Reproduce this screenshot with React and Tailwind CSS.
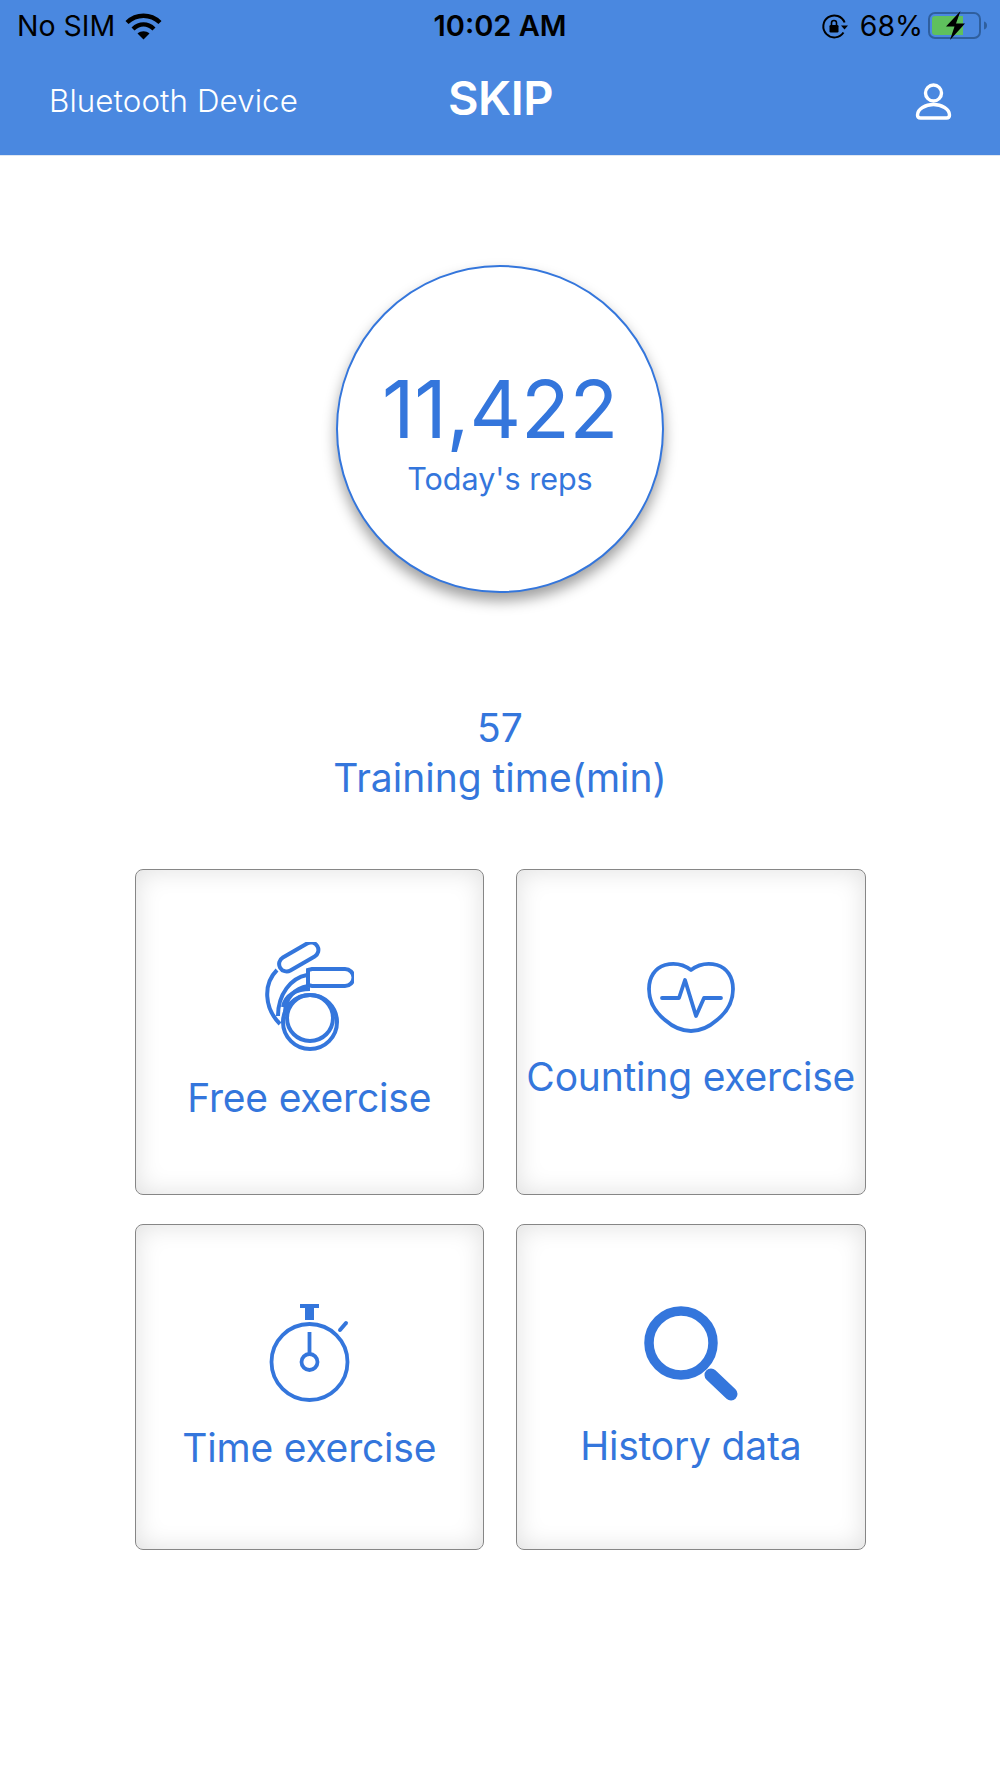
const BLUE = "#3476dc";

function Wifi() {
  return (
    <svg width="37" height="27" viewBox="0 0 37 27" fill="none" stroke="#000" strokeWidth="4.4">
      <path d="M2 9.5C11.5 0.5 25.5 0.5 35 9.5" />
      <path d="M8 16C14.5 10 22.5 10 29 16" />
      <path d="M18.5 26.5L12.5 20.5C16 17.5 21 17.5 24.5 20.5Z" fill="#000" stroke="none" />
    </svg>
  );
}

function RotationLock() {
  return (
    <svg width="27" height="27" viewBox="0 0 27 27" fill="none">
      <path d="M22.5 19.5A11 11 0 1 1 23.6 9.5" stroke="#000" strokeWidth="2" />
      <path d="M20 12.5h7l-3.5 4z" fill="#000" />
      <rect x="8.5" y="12" width="9" height="7.5" rx="1.2" fill="#000" />
      <path d="M10.5 12V10a2.5 2.5 0 0 1 5 0v2" stroke="#000" strokeWidth="1.6" />
    </svg>
  );
}

function Battery() {
  return (
    <svg width="62" height="30" viewBox="0 0 62 30" fill="none">
      <rect x="3" y="2" width="51" height="25" rx="6" stroke="#2f5f9e" strokeWidth="2" />
      <rect x="6" y="5" width="16" height="19" rx="3" fill="#5fc05d" />
      <rect x="20" y="5" width="17" height="19" fill="#5fc05d" />
      <path d="M58 10.500c2 .6 3 2 3 4s-1 3.400-3 4z" fill="#2f5f9e" />
      <path d="M34.500 0L20 15.500h8.500L24 29 39 12.500h-9z" fill="#000" />
    </svg>
  );
}

function User() {
  return (
    <svg width="37" height="40" viewBox="0 0 37 40" fill="none" stroke="#fff" strokeWidth="3.4">
      <circle cx="18.5" cy="11" r="8" />
      <path d="M2.500 33c0-6 8-10.500 16-10.500s16 4.500 16 10.500c0 2-1 3-3 3H5.500c-2 0-3-1-3-3z" />
    </svg>
  );
}

function Rope() {
  return (
    <svg width="89" height="110" viewBox="0 0 89 110" fill="none" stroke={BLUE} strokeWidth="4">
      <rect x="12" y="7.500" width="43" height="15" rx="7.500" transform="rotate(-30 33.500 14.500)" />
      <path d="M43 28l4-1h33a8.500 8.500 0 0 1 0 17H47l-4-1z" />
      <circle cx="45" cy="80" r="27" />
      <circle cx="45" cy="76" r="23" />
      <path d="M18 65C20 53 32 47 45 47" />
      <path d="M12 28C-2 42-1 66 15 82" />
      <path d="M42 33C26 36 13 52 13 74" />
      <path d="M43 44C30 46 20 56 20 71" />
    </svg>
  );
}

function Heart() {
  return (
    <svg width="88" height="72" viewBox="0 0 88 72" fill="none" stroke={BLUE} strokeWidth="3.800" strokeLinejoin="round" strokeLinecap="round">
      <path d="M44 8C36 2 26 1 18 3 8 6 2 15 2 27c0 12 6 23 16 31 8 7 17 11 26 11s18-4 26-11c10-8 16-19 16-31 0-12-6-21-16-24-8-2-18-1-26 5z" />
      <path d="M15 36h17l6-18 11 36 8-18h17" />
    </svg>
  );
}

function Stopwatch() {
  return (
    <svg width="84" height="102" viewBox="0 0 84 102" fill="none" stroke={BLUE} strokeWidth="3.800">
      <path d="M32 1h19v4h-5v12h-9V5h-5z" fill={BLUE} stroke="none" />
      <circle cx="41.500" cy="59" r="38" />
      <circle cx="41.500" cy="59" r="8" />
      <path d="M41.500 29v22" />
      <path d="M72 27l6-7" strokeWidth="4" strokeLinecap="round" />
    </svg>
  );
}

function Search() {
  return (
    <svg width="96" height="96" viewBox="0 0 96 96" fill="none" stroke={BLUE}>
      <circle cx="37" cy="37" r="32" strokeWidth="9.500" />
      <path d="M67 69l20 19" strokeWidth="13" strokeLinecap="round" />
    </svg>
  );
}

function Card({ label, top, gap, icon }) {
  return (
    <div className={`flex h-[326px] flex-col items-center rounded-[8px] border border-[#868686] shadow-[inset_0_0_26px_rgba(0,0,0,0.13)] ${top}`}>
      {icon}
      <div className={`text-[39px] leading-[46px] tracking-[-0.2px] text-[#3476dc] ${gap}`}>{label}</div>
    </div>
  );
}

export default function App() {
  return (
    <div className="min-h-[1778px] bg-white font-['Inter','Liberation_Sans',sans-serif]">
      <header className="h-[156px] border-b border-[#dfe7f2] bg-[#4a88e0]">
        <div className="relative flex h-[52px] items-center justify-between pl-[17px] pr-[12px] text-[28.500px] text-black">
          <div className="flex items-center gap-[10px]">
            <span>No SIM</span>
            <Wifi />
          </div>
          <span className="absolute left-1/2 -translate-x-1/2 text-[29px] font-semibold">10:02 AM</span>
          <div className="flex items-center gap-[3px]">
            <RotationLock />
            <span className="ml-[9px]">68%</span>
            <Battery />
          </div>
        </div>
        <div className="grid h-[100px] grid-cols-[1fr_auto_1fr] items-center pl-[49px] pr-[48px] text-white">
          <span className="pb-[2px] text-[31.300px] font-light tracking-[0.1px]">Bluetooth Device</span>
          <span className="pb-[8px] text-[47px] font-semibold tracking-[-0.5px]">SKIP</span>
          <div className="flex justify-end">
            <User />
          </div>
        </div>
      </header>

      <main className="flex flex-col items-center pt-[109px] text-[#3476dc]">
        <div className="flex h-[328px] w-[328px] flex-col items-center rounded-full border-[2.500px] border-[#3476dc] bg-white pt-[98px] shadow-[0_8px_14px_rgba(0,0,0,0.38)]">
          <div className="text-[80px] leading-[88px] tracking-[-0.2px]">11,422</div>
          <div className="mt-[8px] text-[30.500px] leading-[36px]">Today's reps</div>
        </div>

        <div className="mt-[110px] text-center text-[39px] leading-[50px]">
          <div>57</div>
          <div>Training time(min)</div>
        </div>

        <div className="mt-[66px] grid w-[731px] grid-cols-2 gap-x-[32px] gap-y-[29px]">
          <Card label="Free exercise" top="pt-[72px]" gap="mt-[23px]" icon={<Rope />} />
          <Card label="Counting exercise" top="pt-[92px]" gap="mt-[20px]" icon={<Heart />} />
          <Card label="Time exercise" top="pt-[78px]" gap="mt-[20px]" icon={<div className="pl-[2px]"><Stopwatch /></div>} />
          <Card label="History data" top="pt-[81px]" gap="mt-[21px]" icon={<div className="pl-[2px]"><Search /></div>} />
        </div>
      </main>
    </div>
  );
}
